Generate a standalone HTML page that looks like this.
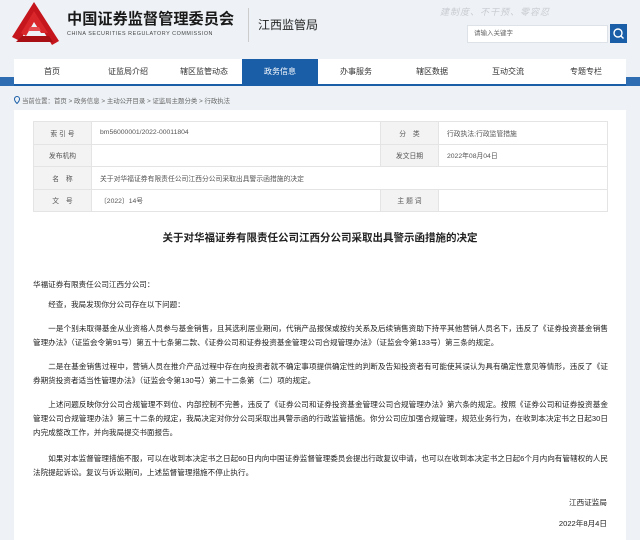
<!DOCTYPE html>
<html><head><meta charset="utf-8"><style>
*{margin:0;padding:0;box-sizing:border-box}
body{width:640px;height:536px;overflow:hidden;background:#eef2f6;font-family:"Liberation Sans","Noto Sans CJK SC",sans-serif;color:#333;position:relative}
.abs{position:absolute}
.band{left:0;top:77px;width:640px;height:9px;background:#2f6db3}
.nav{left:14px;top:59px;width:612px;height:27px;background:#fff;border-bottom:2px solid #1a5ea8;display:flex}
.nav div{font-size:8px;color:#333;text-align:center;line-height:26px}
.nav .on{background:#1a5ea8;color:#fff}
.panel{left:14px;top:110px;width:612px;height:430px;background:#fff}
table{position:absolute;left:33px;top:121px;width:575px;border-collapse:collapse;font-size:6.8px;color:#555}
td{border:1px solid #e4e4e4;height:22.5px;padding-left:8px}
td.l{background:#f3f3f3;text-align:center;padding:0;color:#555;width:58px}
.body{left:33px;width:575px;font-size:7.6px;line-height:14px;color:#222;text-align:justify}
.body p{text-indent:2em}
</style></head><body>
<svg class="abs" style="left:12px;top:2px" width="47" height="43" viewBox="0 0 47 43">
<polygon points="22,0 47,39 40,43 22,14 8,39 0,35" fill="#c4161c"/>
<polygon points="22,9 36,31 29,31 22,20 14,34 9,31" fill="#d9262b"/>
<polygon points="4,40 41,40 37,34 10,34" fill="#a80f14"/>
<polygon points="16,29 29,29 27,25 18,25" fill="#e64a4e"/>
</svg>
<div class="abs" style="left:67px;top:7px;font-size:15.2px;font-weight:bold;color:#1a1a1a">中国证券监督管理委员会</div>
<div class="abs" style="left:67px;top:31px;font-size:5.4px;color:#444;letter-spacing:0.55px">CHINA SECURITIES REGULATORY COMMISSION</div>
<div class="abs" style="left:248px;top:8px;width:1px;height:34px;background:#ccc"></div>
<div class="abs" style="left:258px;top:16px;font-size:12px;color:#222">江西监管局</div>
<div class="abs" style="left:440px;top:5px;font-size:9px;color:#c8ccd2;font-style:italic;letter-spacing:1px">建制度、不干预、零容忍</div>
<div class="abs" style="left:467px;top:25px;width:141px;height:18px;background:#fff;border:1px solid #dde2e8;font-size:6.5px;color:#666;line-height:16px;padding-left:6px">请输入关键字</div>
<div class="abs" style="left:610px;top:24px;width:17px;height:19px;background:#1a5ea8"></div>
<svg class="abs" style="left:612px;top:27px" width="13" height="13" viewBox="0 0 13 13"><circle cx="6" cy="6" r="4" fill="none" stroke="#fff" stroke-width="1.4"/><line x1="9" y1="9" x2="11.5" y2="11.5" stroke="#fff" stroke-width="1.4"/></svg>
<div class="abs band"></div>
<div class="abs nav">
<div style="width:76px">首页</div><div style="width:76px">证监局介绍</div><div style="width:76px">辖区监管动态</div><div class="on" style="width:76px">政务信息</div><div style="width:76px">办事服务</div><div style="width:76px">辖区数据</div><div style="width:76px">互动交流</div><div style="width:80px">专题专栏</div>
</div>
<div class="abs panel"></div>
<svg class="abs" style="left:14px;top:96px" width="6" height="8" viewBox="0 0 6 8"><path d="M3 0.5a2.5 2.5 0 0 1 2.5 2.5c0 2-2.5 4.5-2.5 4.5S0.5 5 0.5 3A2.5 2.5 0 0 1 3 0.5z" fill="none" stroke="#1a5ea8" stroke-width="1"/></svg>
<div class="abs" style="left:22px;top:96px;font-size:6.4px;color:#666">当前位置：首页 &gt; 政务信息 &gt; 主动公开目录 &gt; 证监局主题分类 &gt; 行政执法</div>
<table>
<tr><td class="l">索 引 号</td><td style="width:289px">bm56000001/2022-00011804</td><td class="l" style="width:56px">分　类</td><td>行政执法;行政监管措施</td></tr>
<tr><td class="l">发布机构</td><td></td><td class="l">发文日期</td><td>2022年08月04日</td></tr>
<tr><td class="l">名　称</td><td colspan="3">关于对华福证券有限责任公司江西分公司采取出具警示函措施的决定</td></tr>
<tr><td class="l">文　号</td><td>〔2022〕14号</td><td class="l">主 题 词</td><td></td></tr>
</table>
<div class="abs" style="left:0;width:640px;top:230px;text-align:center;font-size:10.5px;font-weight:bold;color:#222">关于对华福证券有限责任公司江西分公司采取出具警示函措施的决定</div>
<div class="abs body" style="top:278px">华福证券有限责任公司江西分公司：</div>
<div class="abs body" style="top:298px">
<p style="margin-bottom:10px">经查，我局发现你分公司存在以下问题：</p>
<p style="margin-bottom:10px">一是个别未取得基金从业资格人员参与基金销售，且其选利居业期间，代销产品报保或按约关系及后续销售资助下持平其他营销人员名下，违反了《证券投资基金销售管理办法》（证监会令第91号）第五十七条第二款、《证券公司和证券投资基金管理公司合规管理办法》（证监会令第133号）第三条的规定。</p>
<p style="margin-bottom:10px">二是在基金销售过程中，营销人员在推介产品过程中存在向投资者就不确定事项提供确定性的判断及告知投资者有可能使其误认为具有确定性意见等情形，违反了《证券期货投资者适当性管理办法》（证监会令第130号）第二十二条第（二）项的规定。</p>
<p style="margin-bottom:12px">上述问题反映你分公司合规管理不到位、内部控制不完善，违反了《证券公司和证券投资基金管理公司合规管理办法》第六条的规定。按照《证券公司和证券投资基金管理公司合规管理办法》第三十二条的规定，我局决定对你分公司采取出具警示函的行政监管措施。你分公司应加强合规管理，规范业务行为，在收到本决定书之日起30日内完成整改工作，并向我局提交书面报告。</p>
<p>如果对本监督管理措施不服，可以在收到本决定书之日起60日内向中国证券监督管理委员会提出行政复议申请，也可以在收到本决定书之日起6个月内向有管辖权的人民法院提起诉讼。复议与诉讼期间，上述监督管理措施不停止执行。</p>
</div>
<div class="abs" style="right:33px;top:497px;font-size:7.6px;color:#222">江西证监局</div>
<div class="abs" style="right:33px;top:518px;font-size:7.6px;color:#222">2022年8月4日</div>
</body></html>
